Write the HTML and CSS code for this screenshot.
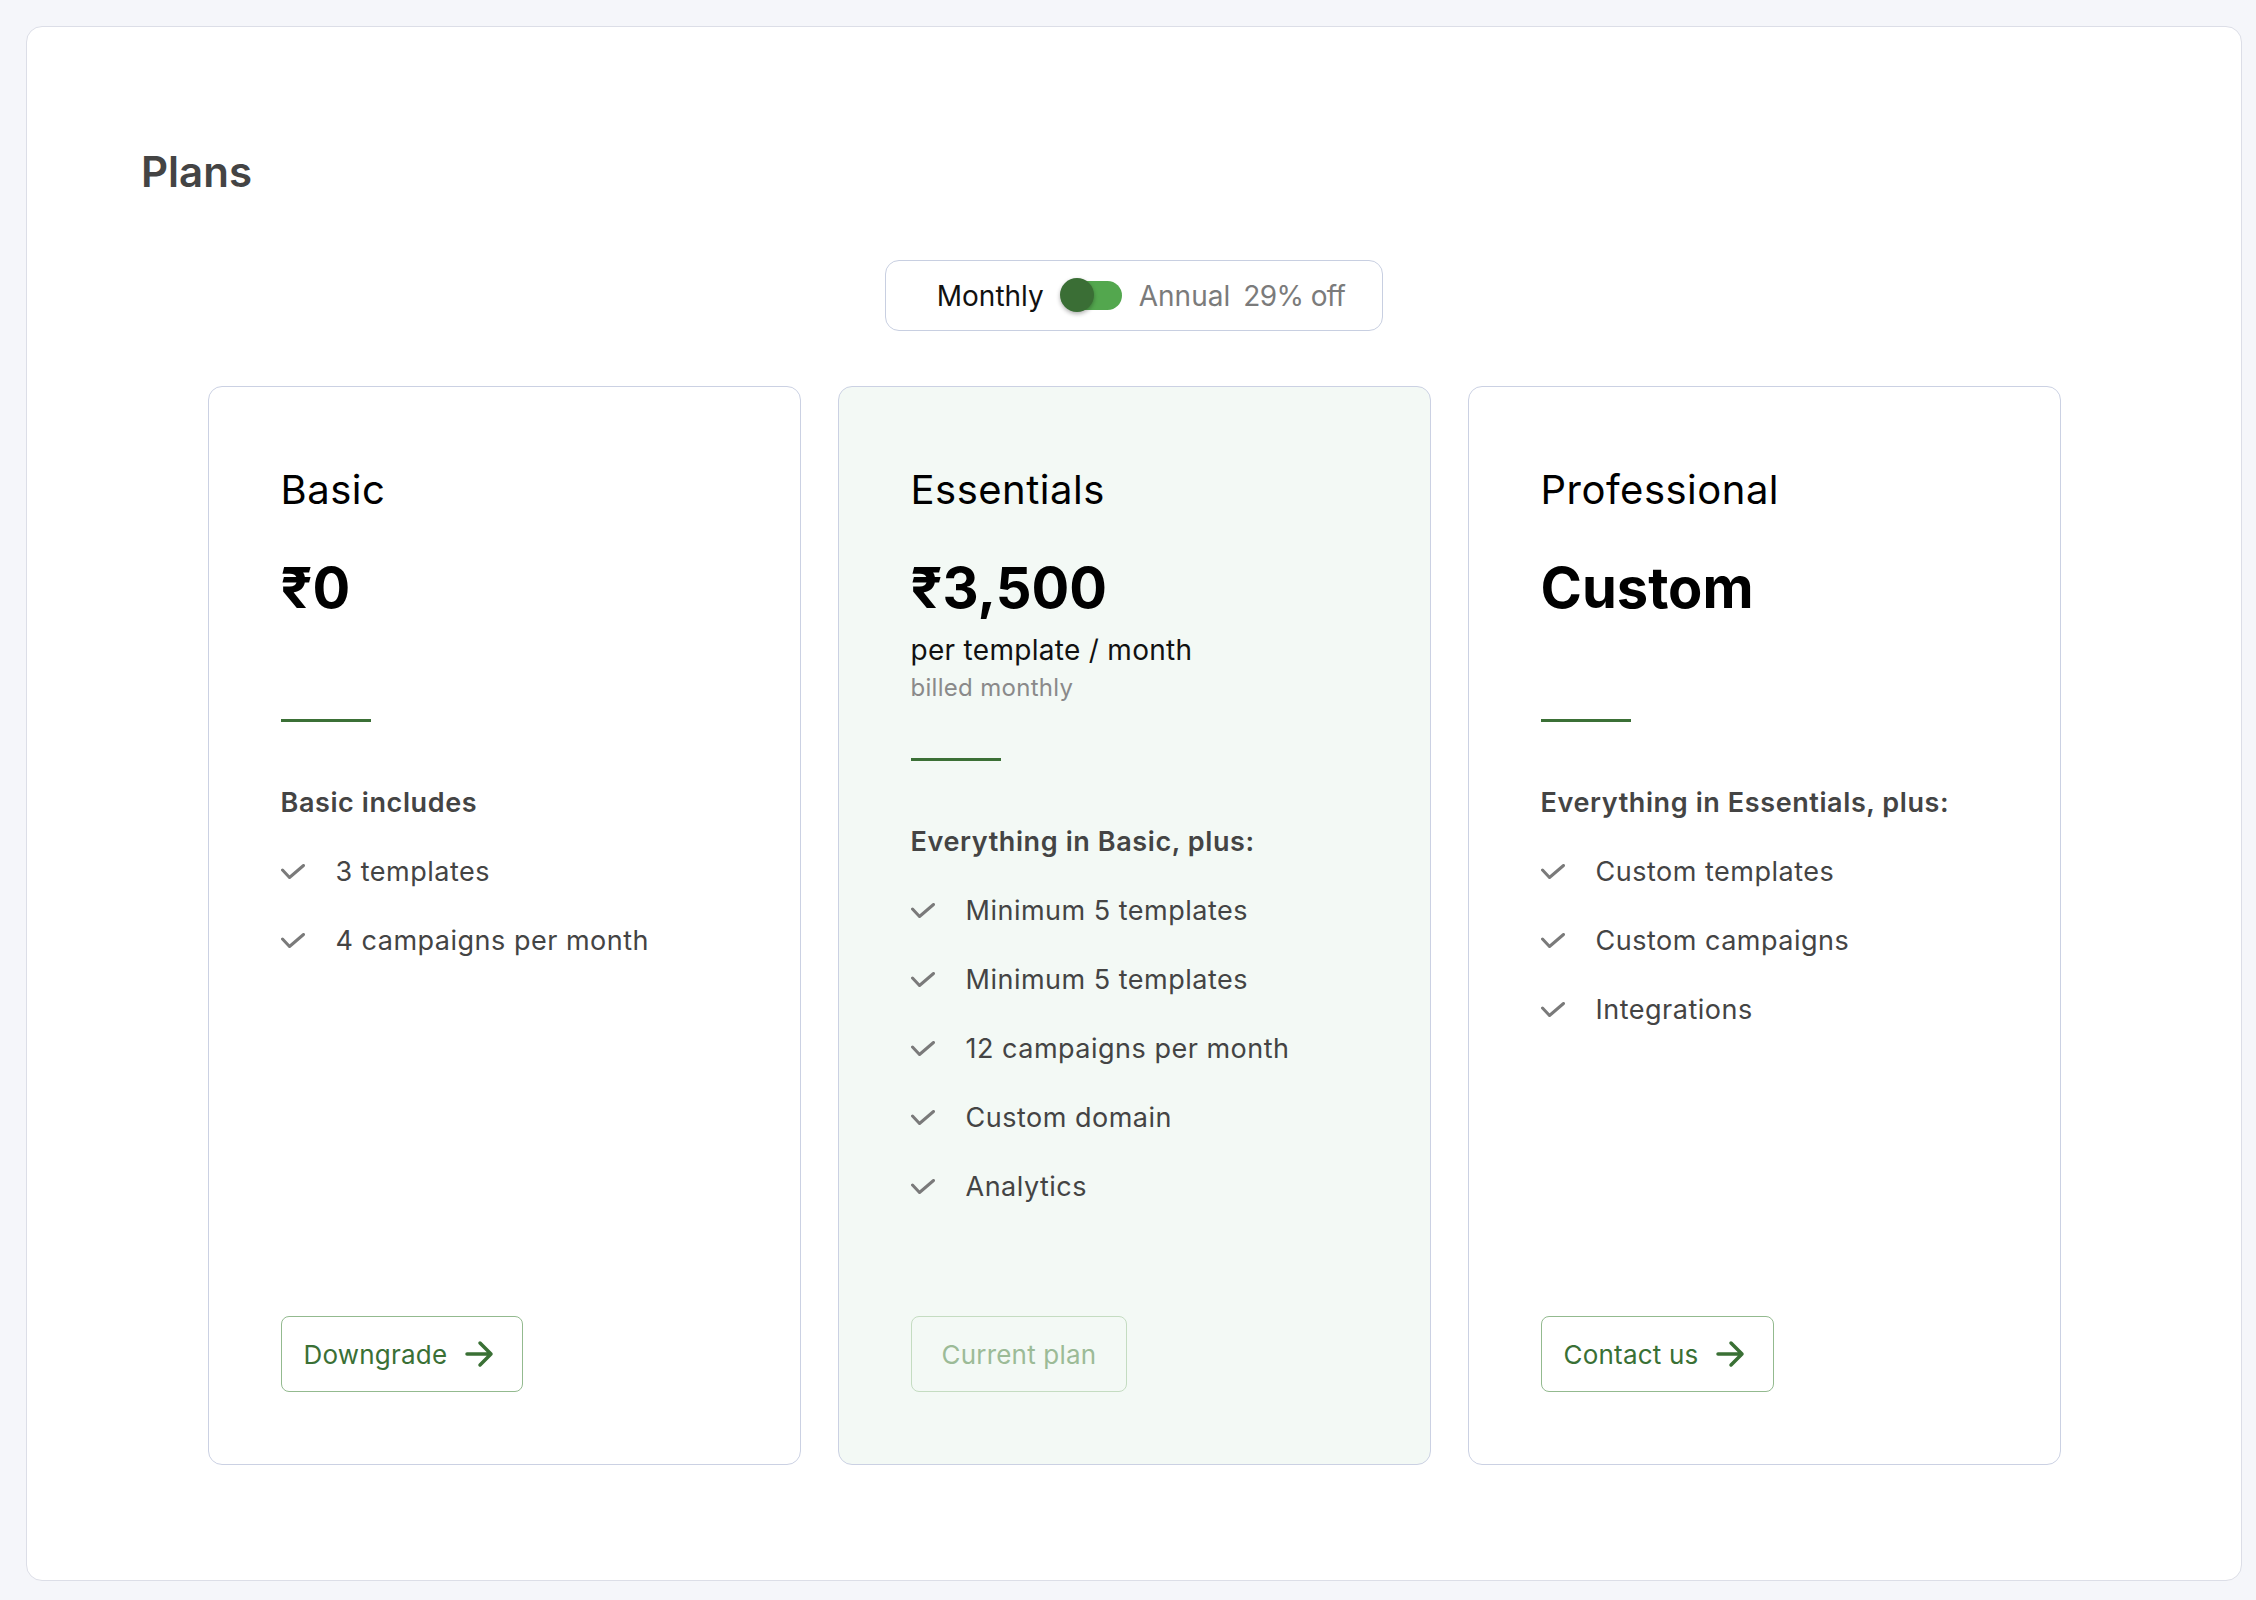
FILE: index.html
```html
<!DOCTYPE html>
<html lang="en">
<head>
<meta charset="utf-8">
<title>Plans</title>
<link rel="stylesheet" href="styles.css">
</head>
<body>
<main class="panel">
  <h1 class="panel-title">Plans</h1>

  <div class="billing">
    <div class="billing-toggle">
      <span class="billing-active">Monthly</span>
      <span class="switch"><span class="switch-knob"></span></span>
      <span class="billing-muted">Annual</span>
      <span class="billing-muted billing-off">29% off</span>
    </div>
  </div>

  <div class="plans">
    <section class="plan">
      <h2 class="plan-name">Basic</h2>
      <div class="plan-pricing">
        <div class="plan-price">₹0</div>
      </div>
      <div class="plan-rule"></div>
      <h3 class="plan-includes">Basic includes</h3>
      <ul class="plan-features">
        <li class="feature"><svg class="check" viewBox="0 0 24 16" width="24" height="16"><polyline points="1.5,6 8.5,13.5 22.5,1.5"/></svg><span>3 templates</span></li>
        <li class="feature"><svg class="check" viewBox="0 0 24 16" width="24" height="16"><polyline points="1.5,6 8.5,13.5 22.5,1.5"/></svg><span>4 campaigns per month</span></li>
      </ul>
      <button class="plan-button">Downgrade<svg class="arrow" viewBox="0 0 30 30" width="30" height="30"><path d="M3 15H27M16 4L27 15L16 26"/></svg></button>
    </section>

    <section class="plan plan-featured">
      <h2 class="plan-name">Essentials</h2>
      <div class="plan-pricing">
        <div class="plan-price">₹3,500</div>
        <div class="plan-unit">per template / month</div>
        <div class="plan-billing">billed monthly</div>
      </div>
      <div class="plan-rule"></div>
      <h3 class="plan-includes">Everything in Basic, plus:</h3>
      <ul class="plan-features">
        <li class="feature"><svg class="check" viewBox="0 0 24 16" width="24" height="16"><polyline points="1.5,6 8.5,13.5 22.5,1.5"/></svg><span>Minimum 5 templates</span></li>
        <li class="feature"><svg class="check" viewBox="0 0 24 16" width="24" height="16"><polyline points="1.5,6 8.5,13.5 22.5,1.5"/></svg><span>Minimum 5 templates</span></li>
        <li class="feature"><svg class="check" viewBox="0 0 24 16" width="24" height="16"><polyline points="1.5,6 8.5,13.5 22.5,1.5"/></svg><span>12 campaigns per month</span></li>
        <li class="feature"><svg class="check" viewBox="0 0 24 16" width="24" height="16"><polyline points="1.5,6 8.5,13.5 22.5,1.5"/></svg><span>Custom domain</span></li>
        <li class="feature"><svg class="check" viewBox="0 0 24 16" width="24" height="16"><polyline points="1.5,6 8.5,13.5 22.5,1.5"/></svg><span>Analytics</span></li>
      </ul>
      <button class="plan-button plan-button-current" disabled>Current plan</button>
    </section>

    <section class="plan">
      <h2 class="plan-name">Professional</h2>
      <div class="plan-pricing">
        <div class="plan-price">Custom</div>
      </div>
      <div class="plan-rule"></div>
      <h3 class="plan-includes">Everything in Essentials, plus:</h3>
      <ul class="plan-features">
        <li class="feature"><svg class="check" viewBox="0 0 24 16" width="24" height="16"><polyline points="1.5,6 8.5,13.5 22.5,1.5"/></svg><span>Custom templates</span></li>
        <li class="feature"><svg class="check" viewBox="0 0 24 16" width="24" height="16"><polyline points="1.5,6 8.5,13.5 22.5,1.5"/></svg><span>Custom campaigns</span></li>
        <li class="feature"><svg class="check" viewBox="0 0 24 16" width="24" height="16"><polyline points="1.5,6 8.5,13.5 22.5,1.5"/></svg><span>Integrations</span></li>
      </ul>
      <button class="plan-button">Contact us<svg class="arrow" viewBox="0 0 30 30" width="30" height="30"><path d="M3 15H27M16 4L27 15L16 26"/></svg></button>
    </section>
  </div>
</main>
</body>
</html>
```

FILE: styles.css
```css
* {
  box-sizing: border-box;
}

html,
body {
  margin: 0;
}

body {
  background: #f5f6fa;
  padding: 26px 14px 19px 26px;
  font-family: Inter, "Noto Sans", "DejaVu Sans", sans-serif;
  color: #444;
}

.panel {
  background: #ffffff;
  border: 1px solid #dcdee7;
  border-radius: 16px;
  height: 1555px;
  padding-top: 119px;
}

.panel-title {
  margin: 0 0 0 114px;
  font-size: 42px;
  line-height: 52px;
  font-weight: 600;
  color: #444444;
}

.billing {
  display: flex;
  justify-content: center;
  margin-top: 62px;
}

.billing-toggle {
  display: flex;
  align-items: center;
  height: 71px;
  padding: 0 37px 0 51px;
  border: 1px solid #c8cfe1;
  border-radius: 14px;
  font-size: 28px;
  line-height: 36px;
}

.billing-active {
  color: #111111;
}

.billing-muted {
  color: #7b7b7b;
}

.billing-off {
  margin-left: 13px;
  letter-spacing: -0.6px;
}

.switch {
  position: relative;
  width: 60px;
  height: 29px;
  margin: 0 17px 0 18px;
  border-radius: 15px;
  background: #53a74e;
}

.switch-knob {
  position: absolute;
  left: -2px;
  top: -3px;
  width: 34px;
  height: 34px;
  border-radius: 50%;
  background: #3a6e35;
  box-shadow: 0 2px 4px rgba(0, 0, 0, 0.3);
}

.plans {
  display: flex;
  justify-content: center;
  gap: 37px;
  margin-top: 55px;
}

.plan {
  width: 593px;
  height: 1079px;
  display: flex;
  flex-direction: column;
  align-items: flex-start;
  padding: 79px 72px 72px 72px;
  border: 1px solid #cbd1e3;
  border-radius: 14px;
  background: #ffffff;
}

.plan-featured {
  background: #f3f9f5;
}

.plan-name {
  margin: 0;
  font-size: 40px;
  line-height: 48px;
  font-weight: 400;
  letter-spacing: 0.5px;
  color: #000000;
}

.plan-pricing {
  margin-top: 42px;
  min-height: 111px;
}

.plan-price {
  font-size: 56px;
  line-height: 64px;
  font-weight: 700;
  color: #000000;
}

.plan-unit {
  margin-top: 10px;
  font-size: 28px;
  line-height: 40px;
  letter-spacing: 0.3px;
  color: #111111;
}

.plan-billing {
  font-size: 24px;
  line-height: 36px;
  letter-spacing: 0.3px;
  color: #8a8a8a;
}

.plan-rule {
  width: 90px;
  height: 3px;
  margin-top: 52px;
  background: #3b7036;
}

.plan-includes {
  margin: 63px 0 0 0;
  font-size: 27px;
  line-height: 36px;
  font-weight: 600;
  letter-spacing: 0.6px;
  color: #444444;
}

.plan-features {
  list-style: none;
  margin: 33px 0 0 0;
  padding: 0;
  display: flex;
  flex-direction: column;
  gap: 33px;
}

.feature {
  display: flex;
  align-items: center;
  font-size: 27px;
  line-height: 36px;
  letter-spacing: 0.5px;
  color: #444444;
}

.check {
  flex: none;
  margin-right: 31px;
  fill: none;
  stroke: #7a7a7a;
  stroke-width: 3;
  stroke-linecap: round;
  stroke-linejoin: round;
}

.plan-button {
  margin-top: auto;
  display: inline-flex;
  align-items: center;
  gap: 17px;
  height: 76px;
  padding: 0 28px 0 22px;
  border: 1.5px solid #93ba8f;
  border-radius: 8px;
  background: transparent;
  font-family: inherit;
  font-size: 26px;
  letter-spacing: 0.2px;
  color: #3a7035;
}

.plan-button-current {
  padding: 0 30px;
  border-color: #c4dcc1;
  color: #9cbb97;
}

.arrow {
  flex: none;
  fill: none;
  stroke: #3a7035;
  stroke-width: 3.5;
  stroke-linecap: round;
  stroke-linejoin: round;
}
```
